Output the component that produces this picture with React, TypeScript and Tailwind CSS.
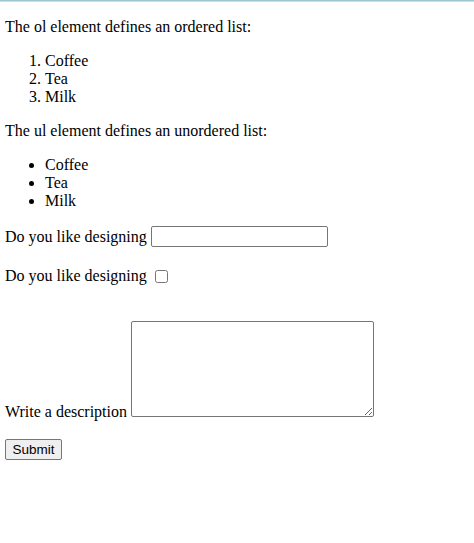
export default function App() {
  return (
    <div className="min-h-[543px] w-[474px] bg-white text-black font-['Liberation_Serif','Times_New_Roman',serif] text-[16px] leading-[normal]">
      <div className="h-[1px] bg-[#9cc4cc]" />
      <div className="h-[1px] bg-[#c9e0e5]" />
      <div className="px-[5px]">
        <p className="mt-[16px]">The ol element defines an ordered list:</p>
        <ol className="mt-[16px] list-decimal pl-[40px]">
          <li>Coffee</li>
          <li>Tea</li>
          <li>Milk</li>
        </ol>
        <p className="mt-[16px]">The ul element defines an unordered list:</p>
        <ul className="mt-[16px] list-disc pl-[40px]">
          <li>Coffee</li>
          <li>Tea</li>
          <li>Milk</li>
        </ul>
        <div className="mt-[16px] flex h-[21px] items-center">
          <span className="whitespace-pre">Do you like designing </span>
          <input
            type="text"
            className="h-[21px] w-[177px] rounded-[2px] border border-[#767676] bg-white px-[2px] text-[13.33px] font-['Liberation_Sans',Arial,sans-serif]"
          />
        </div>
        <div className="mt-[20px] flex h-[18px] items-center">
          <span className="whitespace-pre">Do you like designing </span>
          <input type="checkbox" className="ml-[4px] mr-[3px] h-[13px] w-[13px]" />
        </div>
        <div className="mt-[36px] flex items-end">
          <span className="mb-[-4px] whitespace-pre">Write a description </span>
          <textarea className="block h-[96px] w-[243px] resize rounded-[2px] border border-[#767676] bg-white" />
        </div>
        <div className="mt-[22px]">
          <button
            type="button"
            className="h-[21px] w-[57px] rounded-[2px] border border-[#767676] bg-[#efefef] text-center text-[13.5px] leading-[normal] font-['Liberation_Sans',Arial,sans-serif]"
          >
            Submit
          </button>
        </div>
      </div>
    </div>
  );
}
